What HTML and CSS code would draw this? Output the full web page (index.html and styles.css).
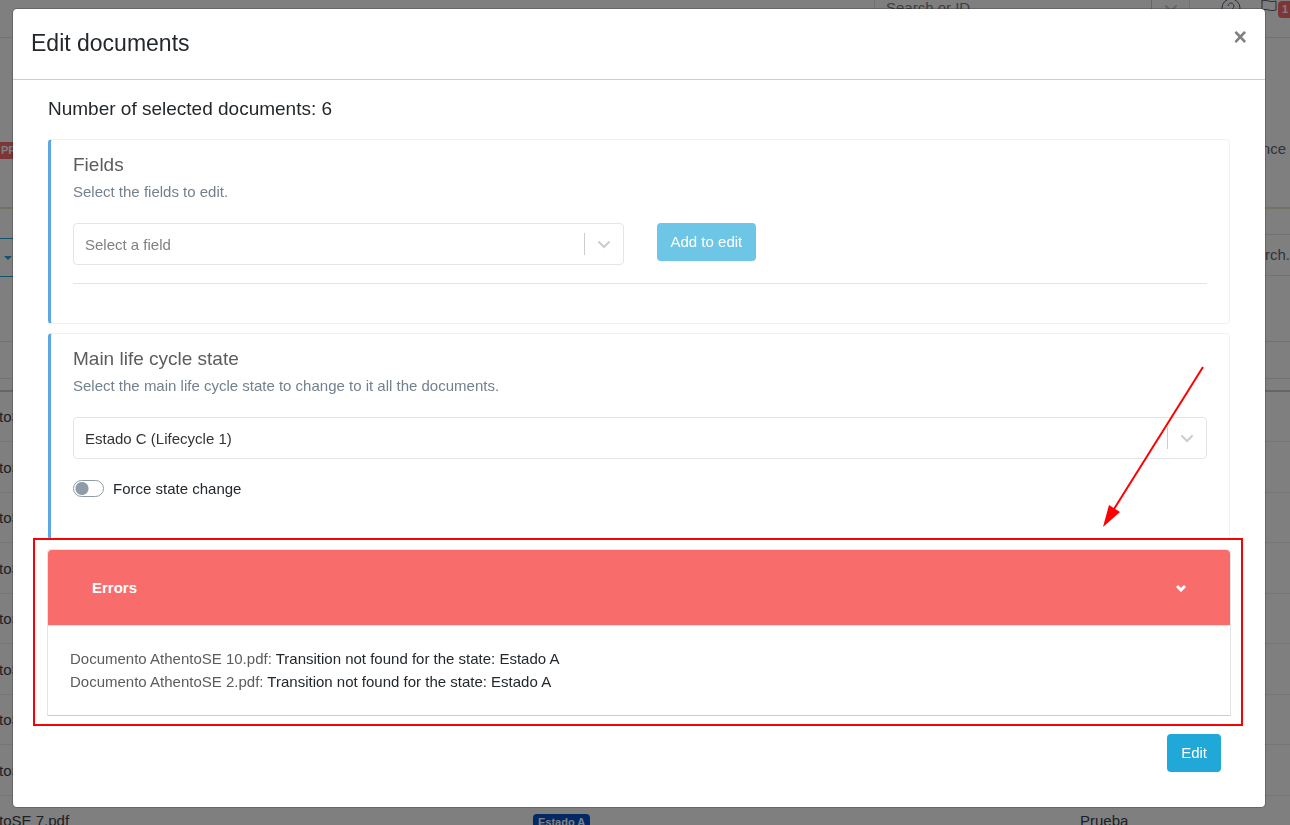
FILE: index.html
```html
<!DOCTYPE html>
<html lang="en">
<head>
<meta charset="utf-8">
<title>Edit documents</title>
<link rel="stylesheet" href="styles.css">
</head>
<body>
<div class="page">
  <header class="topbar">
    <div class="search">
      <span class="search-text">Search or ID</span>
      <span class="search-arrow"><svg class="chevron" viewBox="0 0 14 9"><path d="M2 2l5 5 5-5"/></svg></span>
    </div>
    <svg class="help-icon" viewBox="0 0 20 20"><circle cx="10" cy="10" r="9"/><path d="M7 8a3 3 0 1 1 4.500 2.600c-1 .6-1.500 1-1.500 2M10 14v1.500"/></svg>
    <svg class="flag-icon" viewBox="0 0 18 16"><path d="M2 0v12M2 3c5-2 8 2 14 0v9c-6 2-9-2-14 0"/></svg>
    <span class="count">1</span>
  </header>
  <section class="summary">
    <span class="tag">PR</span>
    <span>nce</span>
  </section>
  <section class="toolbar">
    <button class="menu-button" type="button" aria-label="Actions"><svg viewBox="0 0 8 4"><path d="M0 0h8L4 4z"/></svg></button>
    <span class="toolbar-search">rch.</span>
  </section>
  <table class="documents">
    <thead>
      <tr><th colspan="3"></th></tr>
      <tr><th colspan="3"></th></tr>
    </thead>
    <tbody>
      <tr><td>toSE</td><td></td><td></td></tr>
      <tr><td>toSE</td><td></td><td></td></tr>
      <tr><td>toSE</td><td></td><td></td></tr>
      <tr><td>toSE</td><td></td><td></td></tr>
      <tr><td>toSE</td><td></td><td></td></tr>
      <tr><td>toSE</td><td></td><td></td></tr>
      <tr><td>toSE</td><td></td><td></td></tr>
      <tr><td>toSE</td><td></td><td></td></tr>
      <tr><td>toSE 7.pdf</td><td><span class="state">Estado A</span></td><td>Prueba</td></tr>
    </tbody>
  </table>
</div>

<div class="backdrop">
  <div class="modal" role="dialog" aria-labelledby="modal-title">
    <header class="modal-header">
      <h1 class="modal-title" id="modal-title">Edit documents</h1>
      <button class="close" type="button" aria-label="Close">×</button>
    </header>
    <div class="modal-body">
      <h2 class="selected">Number of selected documents: 6</h2>

      <section class="card">
        <h3 class="card-title">Fields</h3>
        <label class="hint" for="field">Select the fields to edit.</label>
        <div class="field-row">
          <div class="select-box">
            <select class="select placeholder" id="field"><option>Select a field</option></select>
            <span class="separator"></span>
            <svg class="chevron" viewBox="0 0 14 9"><path d="M2 2l5 5 5-5"/></svg>
          </div>
          <button class="button button-muted" type="button">Add to edit</button>
        </div>
        <hr class="rule">
      </section>

      <section class="card">
        <h3 class="card-title">Main life cycle state</h3>
        <label class="hint" for="state">Select the main life cycle state to change to it all the documents.</label>
        <div class="select-box">
          <select class="select" id="state"><option>Estado C (Lifecycle 1)</option></select>
          <span class="separator"></span>
          <svg class="chevron" viewBox="0 0 14 9"><path d="M2 2l5 5 5-5"/></svg>
        </div>
        <div class="switch-row">
          <input class="switch" type="checkbox" id="force">
          <label for="force">Force state change</label>
        </div>
      </section>

      <div class="errors-wrap">
        <section class="errors">
          <button class="errors-header" type="button" aria-expanded="true">
            <span>Errors</span>
            <svg class="errors-arrow" viewBox="0 0 10 8"><path d="M1 2l4 4 4-4"/></svg>
          </button>
          <div class="errors-list">
            <div><span class="doc">Documento AthentoSE 10.pdf:</span> Transition not found for the state: Estado A</div>
            <div><span class="doc">Documento AthentoSE 2.pdf:</span> Transition not found for the state: Estado A</div>
          </div>
        </section>
        <div class="highlight"></div>
        <svg class="arrow" viewBox="0 0 106 165"><path class="arrow-line" d="M103 2L14 144"/><path class="arrow-head" d="M3 162L9 140 20 147z"/></svg>
      </div>
    </div>
    <footer class="modal-footer">
      <button class="button" type="button">Edit</button>
    </footer>
  </div>
</div>
</body>
</html>
```

FILE: styles.css
```css
* { box-sizing: border-box; }

body {
  margin: 0;
  height: 100vh;
  overflow: hidden;
  background: #fff;
  color: #23282c;
  font: 15px/23px "Liberation Sans", Arial, sans-serif;
}

h1, h2, h3 { margin: 0; font-weight: 400; }
button, select { font: inherit; }
svg { display: block; flex: none; }

/* Page behind the dialog */
.page { height: 100vh; overflow: hidden; color: #5c6873; }

.topbar {
  display: flex;
  align-items: flex-start;
  height: 38px;
  border-bottom: 1px solid #e4e5e6;
}
.search {
  display: flex;
  width: 316px;
  height: 30px;
  margin-left: auto;
  border: 1px solid #e4e5e6;
  border-top: 0;
}
.search-text { flex: 1; padding: 0 11px; line-height: 15px; color: #808080; }
.search-arrow { display: flex; justify-content: center; width: 38px; height: 18px; padding-top: 4px; border-left: 1px solid #ccc; }
.help-icon { width: 20px; height: 20px; margin: -2px 0 0 31px; fill: none; stroke: #4f5d73; stroke-width: 1; }
.flag-icon { width: 18px; height: 16px; margin: -2px 0 0 19px; fill: none; stroke: #4f5d73; stroke-width: 1; }
.count {
  width: 12px;
  margin-top: 1px;
  padding-left: 4px;
  border-radius: 4px 0 0 4px;
  background: #f86c6b;
  color: #fff;
  font-size: 11px;
  font-weight: 700;
  line-height: 17px;
}

.summary {
  display: flex;
  justify-content: space-between;
  align-items: center;
  height: 171px;
  padding: 52px 4px 0 0;
  border-bottom: 2px solid #dfe8d0;
}
.tag { margin-top: 4px; padding: 0 1px; background: #f86c6b; color: #fff; font-size: 11px; font-weight: 700; line-height: 17px; }

.toolbar {
  display: flex;
  justify-content: space-between;
  align-items: flex-start;
  height: 97px;
  padding-top: 25px;
}
.menu-button {
  width: 24px;
  height: 39px;
  margin-top: 4px;
  padding: 0 4px;
  border: 1px solid #20a8d8;
  border-left: 0;
  background: #fff;
}
.menu-button svg { width: 8px; height: 4px; fill: #20a8d8; }
.toolbar-search {
  width: 60px;
  border: 1px solid #e4e5e6;
  border-width: 1px 0;
  line-height: 40px;
  text-align: right;
}

.documents { width: 100%; border-spacing: 0; table-layout: fixed; }
.documents th { height: 36px; padding: 0; border-bottom: 1px solid #e4e5e6; }
.documents thead tr + tr th {
  height: 50px;
  border-bottom: 2px solid #c8ced3;
  background: linear-gradient(#e4e5e6, #e4e5e6) 0 36px / 100% 1px no-repeat;
}
.documents td { height: 50px; padding: 0; border-bottom: 1px solid #eaecee; color: #3a4149; white-space: nowrap; }
.documents tr:nth-child(even) td { height: 51px; }
.documents td:first-child { text-indent: -1px; }
.documents td:nth-child(2) { padding-left: 103px; }
.documents td:nth-child(3) { padding-left: 220px; }
.state {
  display: inline-block;
  padding: 0 5px;
  border-radius: 4px;
  background: #0052cc;
  color: #fff;
  font-size: 11px;
  font-weight: 700;
  line-height: 16px;
}

/* Dialog */
.backdrop { position: fixed; inset: 0; padding: 8px 24px 8px 12px; background: rgba(0, 0, 0, .5); }
.modal {
  border: 1px solid rgba(0, 0, 0, .2);
  border-radius: 5px;
  background: #fff;
  background-clip: padding-box;
}
.modal-header {
  display: flex;
  justify-content: space-between;
  align-items: flex-start;
  padding: 17px 18px 18px;
  border-bottom: 1px solid #c8ced3;
}
.modal-title { font-size: 23px; line-height: 35px; }
.close {
  padding: 0;
  border: 0;
  background: none;
  color: #7f7f7f;
  font-size: 23px;
  font-weight: 700;
  line-height: 23px;
}

.modal-body { padding: 17px 34px 0; }
.selected, .card-title { font-size: 19px; line-height: 23px; }
.selected { margin: 0 1px 19px; }

.card {
  margin: 0 1px 9px;
  padding: 13px 22px 39px;
  border: 1px solid #f0f3f5;
  border-left: 3px solid #5da5e3;
  border-radius: 4px;
}
.card-title { color: #5c5c5c; }
.hint { display: block; margin: 4px 0 20px; color: #73818f; }
.field-row { display: grid; grid-template-columns: 1fr 1fr; gap: 33px; align-items: start; justify-items: start; }

.select-box {
  display: flex;
  align-items: center;
  width: 100%;
  height: 42px;
  padding-right: 12px;
  border: 1px solid #e4e5e6;
  border-radius: 4px;
}
.select {
  flex: 1;
  min-width: 0;
  height: 40px;
  padding: 0 11px;
  border: 0;
  background: none;
  color: #333;
  appearance: none;
}
.placeholder { color: #808080; }
.separator { width: 1px; height: 22px; margin-right: 12px; background: #ccc; }
.chevron { width: 14px; height: 9px; fill: none; stroke: #ccc; stroke-width: 2; stroke-linecap: round; }

.rule { margin: 18px 0 0; border: 0; border-top: 1px solid #e4e5e6; }

.switch-row { display: flex; align-items: center; gap: 9px; margin-top: 18px; }
.switch {
  width: 31px;
  height: 17px;
  margin: 0;
  border: 1px solid #8f9ba6;
  border-radius: 9px;
  background: radial-gradient(circle at 8px 50%, #8f9ba6 6px, transparent 7px);
  appearance: none;
}

.button {
  padding: 0 14px;
  border: 0;
  border-radius: 4px;
  background: #20a8d8;
  color: #fff;
  line-height: 38px;
}
.button-muted { background: #6ec6e6; }

.errors-wrap { position: relative; }
.errors { border: 1px solid #e4e5e6; border-bottom-color: #c8ced3; border-radius: 4px 4px 0 0; }
.errors-header {
  display: flex;
  justify-content: space-between;
  align-items: center;
  width: 100%;
  height: 76px;
  padding: 0 44px;
  border: 0;
  border-bottom: 1px solid #e4e5e6;
  border-radius: 4px 4px 0 0;
  background: #f86c6b;
  color: #fff;
  font-weight: 700;
}
.errors-arrow { width: 10px; height: 8px; fill: none; stroke: #fff; stroke-width: 3; }
.errors-list { padding: 21px 22px 22px; }
.doc { color: #5c5c5c; }

.highlight { position: absolute; inset: -11px -12px -10px -14px; border: 2px solid #f00; pointer-events: none; }
.arrow { position: absolute; top: -184px; right: 25px; width: 106px; height: 165px; pointer-events: none; }
.arrow-line { fill: none; stroke: #f00; stroke-width: 2; }
.arrow-head { fill: #f00; }

.modal-footer { display: flex; justify-content: flex-end; padding: 18px 44px 35px; }
```
